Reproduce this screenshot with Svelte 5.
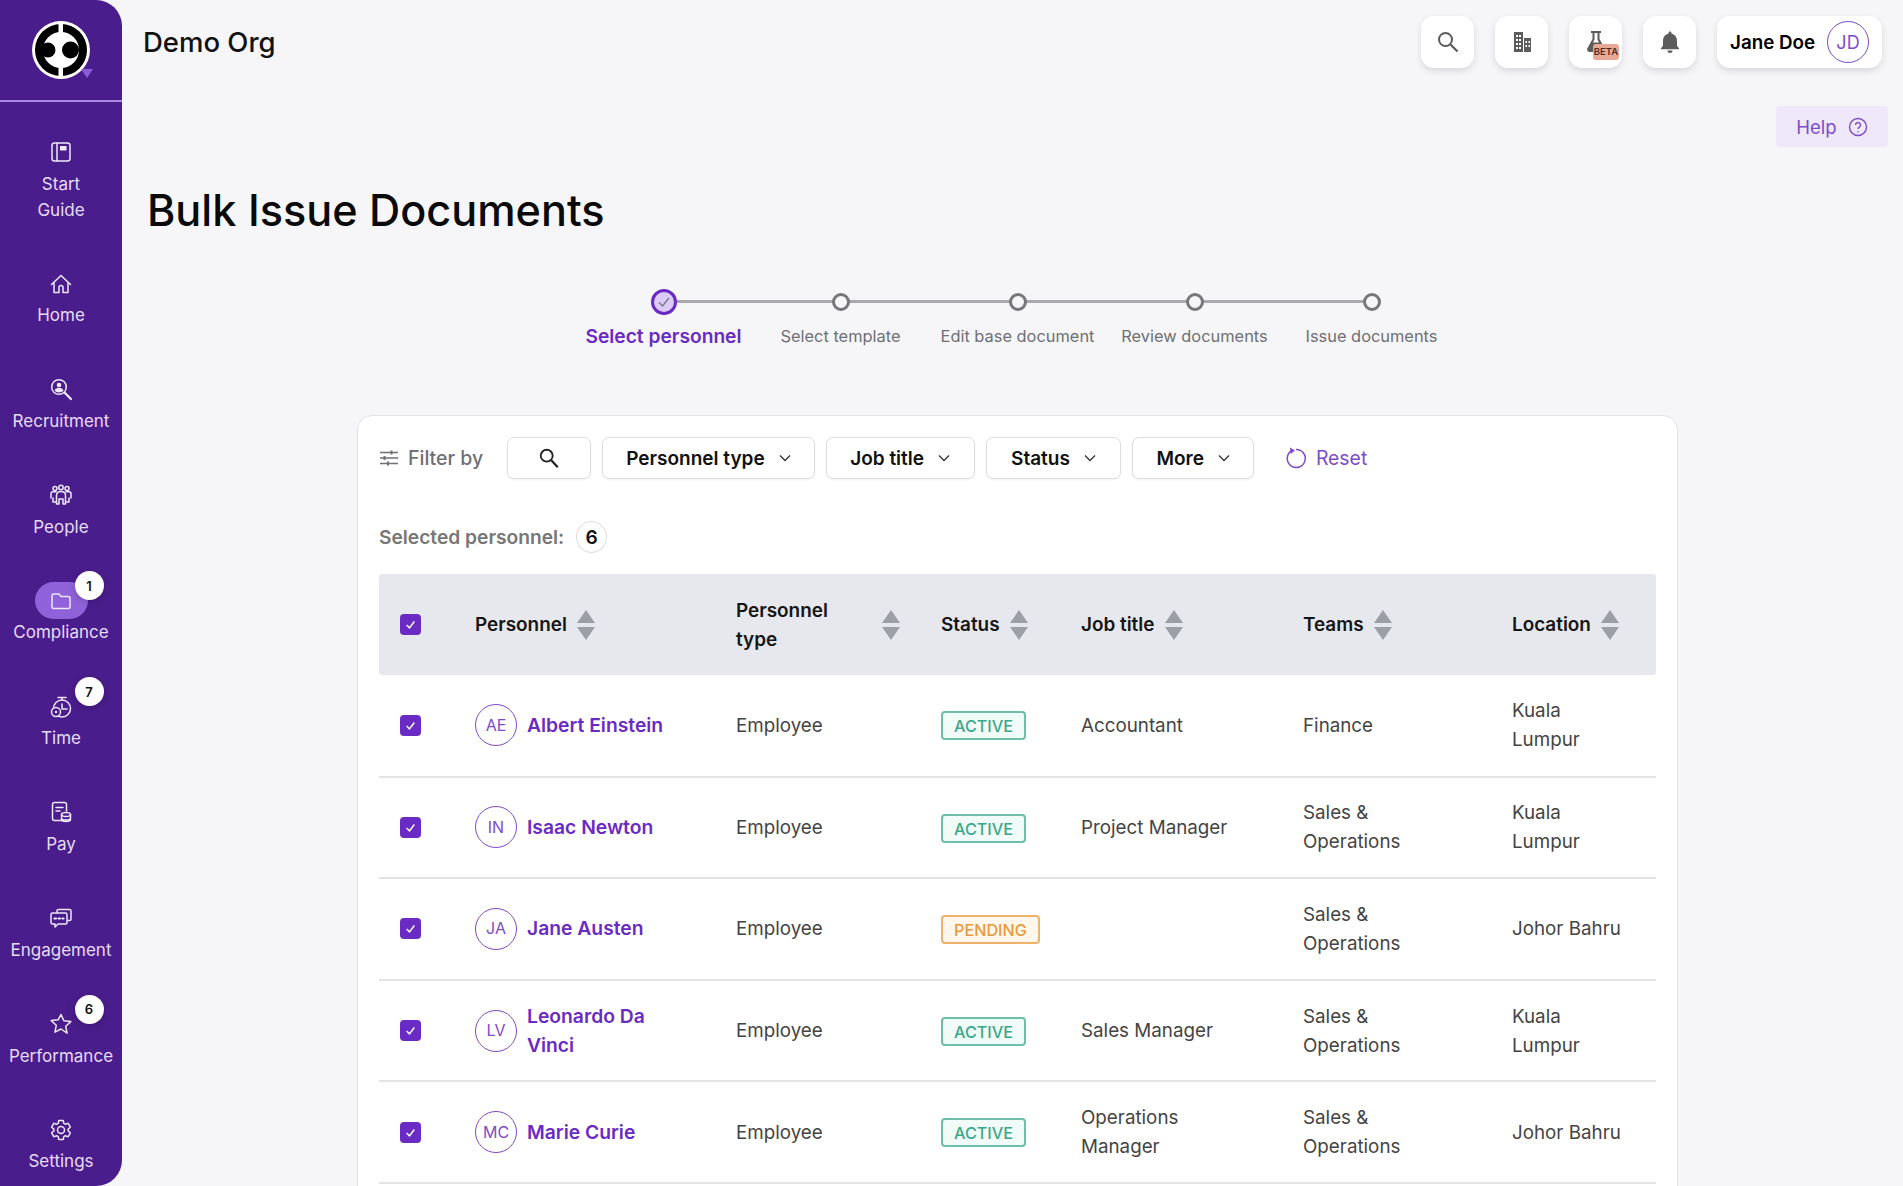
<script>
  const nav = [
    { label: 'Start Guide', k: 'guide', two: true },
    { label: 'Home', k: 'home' },
    { label: 'Recruitment', k: 'rec' },
    { label: 'People', k: 'people' },
    { label: 'Compliance', k: 'folder', active: true, badge: 1 },
    { label: 'Time', k: 'time', badge: 7 },
    { label: 'Pay', k: 'pay' },
    { label: 'Engagement', k: 'eng' },
    { label: 'Performance', k: 'star', badge: 6 },
    { label: 'Settings', k: 'gear' }
  ];
  const steps = ['Select personnel', 'Select template', 'Edit base document', 'Review documents', 'Issue documents'];
  const filters = ['Personnel type', 'Job title', 'Status', 'More'];
  const rows = [
    { i: 'AE', name: 'Albert Einstein', status: 'ACTIVE', job: 'Accountant', team: 'Finance', loc: 'Kuala Lumpur' },
    { i: 'IN', name: 'Isaac Newton', status: 'ACTIVE', job: 'Project Manager', team: 'Sales & Operations', loc: 'Kuala Lumpur' },
    { i: 'JA', name: 'Jane Austen', status: 'PENDING', job: '', team: 'Sales & Operations', loc: 'Johor Bahru' },
    { i: 'LV', name: 'Leonardo Da Vinci', status: 'ACTIVE', job: 'Sales Manager', team: 'Sales & Operations', loc: 'Kuala Lumpur' },
    { i: 'MC', name: 'Marie Curie', status: 'ACTIVE', job: 'Operations Manager', team: 'Sales & Operations', loc: 'Johor Bahru' }
  ];
  const heads = ['Job title', 'Teams', 'Location'];
</script>

{#snippet sort()}
  <svg class="sort" viewBox="0 0 18 30"><path d="M9 0 18 13H0zM9 30 0 17H18z" /></svg>
{/snippet}

{#snippet check()}
  <span class="check"><svg viewBox="0 0 20 20"><path d="M5.5 10.5 8.8 14 14.5 6.5" /></svg></span>
{/snippet}

{#snippet navIcon(k)}
  <svg class="nicon" viewBox="0 0 24 24">
    {#if k === 'guide'}
      <rect x="3" y="3" width="18" height="18" rx="2.5" /><path d="M8 3v18" /><rect class="fill" x="11" y="6" width="6.5" height="4.5" />
    {:else if k === 'home'}
      <path d="M2.5 12.5 12 3.5l9.500 9M5 10.500V20.500h5V15.500a2 2 0 0 1 4 0v5h5V10.500" />
    {:else if k === 'rec'}
      <circle cx="10" cy="10" r="7.300" /><path class="thick" d="M15.500 15.500 22 22" /><circle class="fill" cx="10" cy="8" r="2.300" /><path class="fill" d="M5.500 13.500c.8-2 2.500-2.800 4.500-2.800s3.700.8 4.500 2.800c-1 1.200-2.700 1.900-4.500 1.900s-3.500-.7-4.500-1.900z" />
    {:else if k === 'people'}
      <circle cx="6" cy="5.500" r="2" /><circle cx="12" cy="4.500" r="2.200" /><circle cx="18" cy="5.500" r="2" /><path d="M2 15V10.500c0-1 1-1.800 2-1.800h3M22 15V10.500c0-1-1-1.800-2-1.800h-3M4 15v4h3M20 15v4h-3M7.500 21v-8.500c0-2 1.500-4 4.500-4s4.500 2 4.500 4V21h-2.500v-5h-4v5z" />
    {:else if k === 'folder'}
      <path d="M3 7a2 2 0 0 1 2-2h5l2 2.500h7a2 2 0 0 1 2 2V18a1.500 1.500 0 0 1-1.500 1.500h-15A1.500 1.500 0 0 1 3 18z" />
    {:else if k === 'time'}
      <circle cx="13" cy="13.500" r="8.500" /><path d="M9 2.500h8M13 2.500V5M13 9v5h5" /><circle class="dark" cx="7" cy="17" r="4.500" /><circle class="fill" cx="7" cy="17" r="1.200" />
    {:else if k === 'pay'}
      <path d="M13 20.500H5.500A2 2 0 0 1 3.500 18.500V4.500a2 2 0 0 1 2-2h10a2 2 0 0 1 2 2V11" /><path d="M7 7.500h7M7 11h4" /><ellipse class="dark" cx="17" cy="14.500" rx="4.500" ry="2" /><path d="M12.500 14.500v5c0 1.100 2 2 4.500 2s4.500-.9 4.500-2v-5M12.500 18c0 1.100 2 2 4.500 2s4.500-.9 4.500-2" />
    {:else if k === 'eng'}
      <path d="M8 6.500V5a1.500 1.500 0 0 1 1.500-1.500h11A1.500 1.500 0 0 1 22 5v8a1.500 1.500 0 0 1-1.500 1.500H19" /><path d="M3.500 7h13A1.500 1.500 0 0 1 18 8.500v8a1.500 1.500 0 0 1-1.500 1.500H9l-3 3v-3H3.500A1.500 1.500 0 0 1 2 16.500v-8A1.500 1.500 0 0 1 3.500 7z" /><path class="thick" stroke-dasharray="1.500 2.500" d="M5.500 12.500h9" />
    {:else if k === 'star'}
      <path d="M12 2.500l2.900 6.300 6.900.8-5.100 4.700 1.400 6.800L12 17l-6.100 3.100 1.400-6.800-5.100-4.700 6.900-.8z" />
    {:else}
      <path d="M19.140 12.940c.04-.3.06-.61.06-.94 0-.32-.02-.64-.07-.94l2.030-1.580c.18-.14.23-.41.12-.61l-1.920-3.320c-.12-.22-.37-.29-.59-.22l-2.390.96c-.5-.38-1.030-.7-1.620-.94l-.36-2.540c-.04-.24-.24-.41-.48-.41h-3.840c-.24 0-.43.17-.47.41l-.36 2.540c-.59.24-1.130.57-1.620.94l-2.390-.96c-.22-.08-.47 0-.59.22L2.740 8.870c-.12.21-.08.47.12.61l2.030 1.580c-.05.3-.09.63-.09.94s.02.64.07.94l-2.030 1.580c-.18.14-.23.41-.12.61l1.920 3.320c.12.22.37.29.59.22l2.390-.96c.5.38 1.030.7 1.620.94l.36 2.540c.05.24.24.41.48.41h3.840c.24 0 .44-.17.47-.41l.36-2.540c.59-.24 1.130-.56 1.620-.94l2.390.96c.22.08.47 0 .59-.22l1.920-3.320c.12-.22.07-.47-.12-.61l-2.010-1.580z" /><circle cx="12" cy="12" r="3.500" />
    {/if}
  </svg>
{/snippet}

<div class="shell">
  <aside class="side">
    <div class="brand">
      <svg class="logo" viewBox="0 0 58 58">
        <circle cx="29" cy="29" r="29" fill="#fff" />
        <circle cx="29" cy="29" r="26" fill="#000" />
        <circle cx="29" cy="29" r="18" fill="#fff" />
        <circle cx="16" cy="29" r="7.500" fill="#000" />
        <circle cx="38.500" cy="29" r="8.500" fill="#000" />
        <rect x="26.500" y="0" width="4.500" height="13" fill="#fff" />
        <rect x="26.500" y="45" width="4.500" height="13" fill="#fff" />
      </svg>
      <span class="tri"></span>
    </div>
    <nav class="nav">
      {#each nav as n}
        <a class="item" class:twoline={n.two} href="#/">
          <span class="iconwrap" class:on={n.active}>
            {@render navIcon(n.k)}
            {#if n.badge}<span class="badge">{n.badge}</span>{/if}
          </span>
          <span class="label">{n.label}</span>
        </a>
      {/each}
    </nav>
  </aside>

  <main class="main">
    <header class="top">
      <div class="org">Demo Org</div>
      <div class="tools">
        <button class="tool" aria-label="Search">
          <svg viewBox="0 0 24 24" class="ticon"><circle cx="9.500" cy="9.500" r="6.500" fill="none" stroke="#5c5c5c" stroke-width="2" /><path d="M14.500 14.500 21.500 21.500" stroke="#5c5c5c" stroke-width="2.300" /></svg>
        </button>
        <button class="tool" aria-label="Organisation">
          <svg viewBox="0 0 24 24" class="ticon" fill="#5c5c5c"><path fill-rule="evenodd" d="M4 2h9v20H4zM6 5v2h2V5zm3 0v2h2V5zM6 9v2h2V9zm3 0v2h2V9zM6 13v2h2v-2zm3 0v2h2v-2zM6 17v2h2v-2zm3 0v2h2v-2z" /><path fill-rule="evenodd" d="M14 8h7v14h-7zm1.500 3v2H17v-2zm3 0v2H20v-2zm-3 4v2H17v-2zm3 0v2H20v-2z" /></svg>
        </button>
        <button class="tool" aria-label="Labs">
          <svg viewBox="0 0 24 24" class="ticon" fill="#5c5c5c"><path fill-rule="evenodd" d="M7 1h10v2h-1.500v6l5 9c.8 1.700-.3 4-2.500 4H6c-2.500 0-3.500-2.300-2.500-4l5-9V3H7zm3.500 2v6.500L9 12.500h6l-1.500-3V3z" /></svg>
          <span class="beta">BETA</span>
        </button>
        <button class="tool" aria-label="Notifications">
          <svg viewBox="0 0 24 24" class="ticon" fill="#5c5c5c"><path d="M12 1.500c.9 0 1.500.6 1.500 1.500v.7c3.500.7 5.500 3.500 5.500 7v5l2 2.500v1H3v-1l2-2.500v-5c0-3.500 2-6.300 5.500-7V3c0-.9.600-1.500 1.500-1.500zM9.500 20.500h5a2.500 2.500 0 0 1-5 0z" /></svg>
        </button>
        <button class="user"><span class="uname">Jane Doe</span><span class="uav">JD</span></button>
      </div>
    </header>

    <div class="helprow">
      <button class="help">Help
        <svg viewBox="0 0 20 20" class="helpi"><circle cx="10" cy="10" r="8.500" /><path d="M7.500 8a2.500 2.500 0 1 1 3.800 2.100c-.9.600-1.300 1-1.300 2" /><circle class="dot" cx="10" cy="14.700" r=".8" /></svg>
      </button>
    </div>

    <h1 class="title">Bulk Issue Documents</h1>

    <div class="content">
      <ol class="steps">
        {#each steps as s, i}
          <li class="step" class:cur={i === 0}>
            <span class="dotwrap">
              {#if i === 0}
                <span class="dot1"><svg viewBox="0 0 20 20"><path d="M5 10.500 8.500 14 15 6" /></svg></span>
              {:else}
                <span class="dotn"></span>
              {/if}
            </span>
            <span class="slabel">{s}</span>
          </li>
        {/each}
      </ol>

      <section class="card">
        <div class="filters">
          <span class="fby">
            <svg viewBox="0 0 20 20" class="fbyi"><path d="M1 4.500h18M1 10h18M1 15.500h18" /><path class="k" d="M12.500 2.500v4M5.500 8v4M9 13.500v4" /></svg>
            Filter by
          </span>
          <button class="fbtn fsearch" aria-label="Search">
            <svg viewBox="0 0 24 24" width="22" height="22"><circle cx="9.500" cy="9.500" r="6.500" fill="none" stroke="#222" stroke-width="2" /><path d="M14.500 14.500 21.500 22" stroke="#222" stroke-width="2.500" /></svg>
          </button>
          {#each filters as f}
            <button class="fbtn">{f}
              <svg viewBox="0 0 12 8" class="chev"><path d="M1 1.500 6 6.500 11 1.500" /></svg>
            </button>
          {/each}
          <button class="reset">
            <svg viewBox="0 0 24 24" class="reseti"><path d="M7 5.200A9 9 0 1 0 12 3.500" /><path class="fil" d="M6 1.500 11 4.500 6.500 8z" /></svg>
            Reset
          </button>
        </div>

        <div class="selected">Selected personnel: <span class="count">6</span></div>

        <table class="tbl">
          <colgroup>
            <col class="c1" /><col class="c2" /><col class="c3" /><col class="c4" /><col class="c5" /><col class="c6" /><col />
          </colgroup>
          <thead>
            <tr>
              <th class="cb">{@render check()}</th>
              <th><span class="th">Personnel {@render sort()}</span></th>
              <th><span class="th spread"><span>Personnel<br />type</span> {@render sort()}</span></th>
              <th><span class="th">Status {@render sort()}</span></th>
              {#each heads as h}
                <th><span class="th">{h} {@render sort()}</span></th>
              {/each}
            </tr>
          </thead>
          <tbody>
            {#each rows as r}
              <tr>
                <td class="cb">{@render check()}</td>
                <td><span class="who"><span class="av">{r.i}</span><a class="name" href="#/">{r.name}</a></span></td>
                <td>Employee</td>
                <td><span class="chip" class:pending={r.status === 'PENDING'}>{r.status}</span></td>
                <td class="job">{r.job}</td>
                <td class="team">{r.team}</td>
                <td class="loc">{r.loc}</td>
              </tr>
            {/each}
            <tr class="ghost"><td colspan="7"></td></tr>
          </tbody>
        </table>
      </section>
    </div>
  </main>
</div>

<style>
  :global(html), :global(body) { margin: 0; height: 100%; overflow: hidden; }
  :global(body) { background: #f6f6f8; }
  .shell { display: flex; height: 1186px; overflow: hidden; font-family: Inter, "Noto Sans", sans-serif; color: #111; }
  button { font: inherit; cursor: pointer; }
  a { text-decoration: none; color: inherit; }

  .side { width: 122px; flex: none; background: #4a1d8c; border-radius: 0 26px 26px 0; display: flex; flex-direction: column; overflow: hidden; }
  .brand { flex: none; height: 100px; border-bottom: 2px solid #a98ade; display: flex; align-items: center; justify-content: center; position: relative; }
  .logo { width: 58px; height: 58px; }
  .tri { position: absolute; left: 81px; top: 69px; width: 0; height: 0; border-left: 6px solid transparent; border-right: 6px solid transparent; border-top: 9px solid #8a5ad8; }
  .nav { display: flex; flex-direction: column; padding-top: 31.5px; }
  .item { flex: none; height: 105.800px; display: flex; flex-direction: column; align-items: center; color: #e7dcf8; }
  .item.twoline { height: 131.500px; }
  .iconwrap { position: relative; width: 53px; height: 37px; flex: none; display: flex; align-items: center; justify-content: center; border-radius: 19px; }
  .iconwrap.on { background: #8f62d9; }
  .nicon { width: 24px; height: 24px; fill: none; stroke: #efe7fb; stroke-width: 1.500; stroke-linecap: round; stroke-linejoin: round; }
  .nicon :global(.fill) { fill: #efe7fb; stroke: none; }
  .nicon :global(.thick) { stroke-width: 2.200; }
  .nicon :global(.dark) { fill: #4a1d8c; }
  .badge { position: absolute; left: 40px; top: -11px; width: 29px; height: 29px; background: #fff; border-radius: 50%; color: #111; font-size: 13px; font-weight: 600; display: flex; align-items: center; justify-content: center; box-shadow: 0 2px 6px rgba(0,0,0,.18); }
  .label { font-size: 17px; line-height: 26px; text-align: center; width: 70px; white-space: normal; }
  .item:not(.twoline) .label { width: auto; white-space: nowrap; }

  .main { flex: 1; min-width: 0; }
  .top { display: flex; justify-content: space-between; padding: 16px 21px 0; }
  .org { font-size: 27.500px; font-weight: 500; line-height: 52px; }
  .tools { display: flex; gap: 21px; }
  .tool { position: relative; width: 53px; height: 52px; border: 0; background: #fff; border-radius: 13px; box-shadow: 0 3px 7px rgba(0,0,0,.12); display: flex; align-items: center; justify-content: center; padding: 0; }
  .ticon { width: 24px; height: 24px; }
  .beta { position: absolute; right: 3px; bottom: 8px; width: 26px; height: 16px; background: #e7a996; color: #4b2a22; font-size: 9.500px; font-weight: 600; border-radius: 3px; line-height: 16px; text-align: center; }
  .user { height: 52px; width: 165px; border: 0; background: #fff; border-radius: 13px; box-shadow: 0 3px 7px rgba(0,0,0,.12); display: flex; align-items: center; justify-content: space-between; padding: 0 13px 0 13px; }
  .uname { font-size: 18.800px; font-weight: 600; white-space: nowrap; }
  .uav { width: 42px; height: 42px; flex: none; box-sizing: border-box; border: 1.500px solid #7d4cc9; border-radius: 50%; color: #7d4cc9; font-size: 18px; display: flex; align-items: center; justify-content: center; }

  .helprow { display: flex; justify-content: flex-end; padding: 38px 15px 0 0; }
  .help { width: 112px; height: 41px; border: 0; background: #efe8fb; color: #7d4cc9; border-radius: 3px; font-size: 18.500px; display: flex; align-items: center; justify-content: center; gap: 11px; padding: 0; }
  .helpi { width: 20px; height: 20px; fill: none; stroke: #7d4cc9; stroke-width: 1.400; }
  .helpi :global(.dot) { fill: #7d4cc9; stroke: none; }

  .title { margin: 39px 0 0 25px; font-size: 43.200px; line-height: 48px; font-weight: 500; color: #0a0a0a; }

  .content { margin: 54px 0 0 235px; width: 1321px; }
  .steps { list-style: none; margin: 0; padding: 0; display: flex; justify-content: center; }
  .step { position: relative; width: 177px; display: flex; flex-direction: column; align-items: center; }
  .step:not(:last-child)::after { content: ""; position: absolute; left: 50%; width: 100%; top: 12px; height: 3px; background: #a9a9ad; }
  .dotwrap { height: 27px; display: flex; align-items: center; position: relative; z-index: 1; }
  .dot1 { width: 26px; height: 26px; box-sizing: border-box; border-radius: 50%; border: 3px solid #6a2bc4; background: #dccbf6; display: flex; }
  .dot1 svg { fill: none; stroke: #7a7a86; stroke-width: 1.400; width: 20px; height: 20px; }
  .dotn { width: 18px; height: 18px; box-sizing: border-box; border-radius: 50%; border: 3px solid #77777b; background: #f6f6f8; }
  .slabel { margin-top: 9px; font-size: 16.400px; line-height: 24px; color: #6f6f74; white-space: nowrap; }
  .cur .slabel { font-size: 19.200px; font-weight: 600; color: #6a2bc4; }

  .card { margin-top: 67px; background: #fff; border: 1px solid #e2e2e6; border-radius: 15px; padding: 21px; }
  .filters { display: flex; align-items: center; gap: 11px; }
  .fby { display: flex; align-items: center; gap: 9px; font-size: 19.500px; font-weight: 500; color: #6f6f74; margin-right: 13px; white-space: nowrap; }
  .fbyi { width: 20px; height: 20px; fill: none; stroke: #6f6f74; stroke-width: 1.300; }
  .fbyi :global(.k) { stroke-width: 2; }
  .fbtn { height: 42px; box-sizing: border-box; padding: 0 23px; background: #fff; border: 1px solid #dedee2; border-radius: 7px; font-size: 19px; font-weight: 600; color: #111; display: flex; align-items: center; gap: 14px; box-shadow: 0 1px 2px rgba(0,0,0,.05); white-space: nowrap; }
  .fbtn:nth-child(4) { padding: 0 23.500px; }
  .fbtn:nth-child(5) { padding: 0 24.500px; }
  .fsearch { width: 84px; justify-content: center; padding: 0; }
  .chev { width: 12px; height: 8px; fill: none; stroke: #333; stroke-width: 1.300; }
  .reset { border: 0; background: none; color: #7d4cc9; font-size: 19.400px; display: flex; align-items: center; gap: 8px; margin-left: 19px; padding: 0; }
  .reseti { width: 24px; height: 24px; fill: none; stroke: #7d4cc9; stroke-width: 1.500; }
  .reseti :global(.fil) { fill: #7d4cc9; stroke: none; }

  .selected { margin-top: 42px; height: 32px; display: flex; align-items: center; gap: 12px; font-size: 19.200px; font-weight: 600; color: #777; }
  .count { width: 31px; height: 32px; box-sizing: border-box; border: 1px solid #dedee2; border-radius: 50%; color: #111; display: flex; align-items: center; justify-content: center; }

  .tbl { margin-top: 21px; width: 1277px; table-layout: fixed; border-collapse: collapse; font-size: 18.800px; color: #444; }
  .c1 { width: 96px; } .c2 { width: 261px; } .c3 { width: 205px; } .c4 { width: 140px; } .c5 { width: 222px; } .c6 { width: 209px; }
  thead tr { background: #e6e8ed; height: 101px; }
  th { padding: 0; text-align: left; font-weight: 600; font-size: 18.900px; color: #161616; line-height: 29px; }
  th:first-child { border-radius: 3px 0 0 3px; }
  th:last-child { border-radius: 0 3px 3px 0; }
  .th { display: flex; align-items: center; gap: 10.500px; }
  .spread { justify-content: space-between; padding-right: 41px; }
  .sort { width: 18px; height: 30px; fill: #9c9fa6; flex: none; }
  tbody tr { height: 101.600px; border-bottom: 2px solid #e3e3e6; }
  td { padding: 0; line-height: 29px; }
  .cb { padding-left: 21px; }
  .check { width: 21px; height: 21px; border-radius: 4px; background: #6a2bc4; display: flex; align-items: center; justify-content: center; }
  .check svg { width: 17px; height: 17px; fill: none; stroke: #fff; stroke-width: 1.800; }
  .who { display: flex; align-items: center; gap: 10px; padding-right: 58px; }
  .av { flex: none; width: 42px; height: 42px; box-sizing: border-box; border: 1.500px solid #7d4cc9; border-radius: 50%; color: #7d4cc9; font-size: 16px; display: flex; align-items: center; justify-content: center; }
  .name { color: #6a2bc4; font-weight: 600; font-size: 19.300px; }
  .chip { display: inline-block; height: 29px; line-height: 26px; box-sizing: border-box; padding: 0 11px; font-size: 16.200px; font-weight: 500; color: #3aa88b; background: #f1fbf7; border: 2px solid #6dbfa9; border-radius: 4px; vertical-align: middle; }
  .chip.pending { color: #e89a3c; background: #fff7ec; border-color: #efb26a; }
  .job { padding-right: 60px; }
  .team { padding-right: 60px; }
  .loc { padding-right: 33px; }
  .ghost { border: 0; }
</style>
